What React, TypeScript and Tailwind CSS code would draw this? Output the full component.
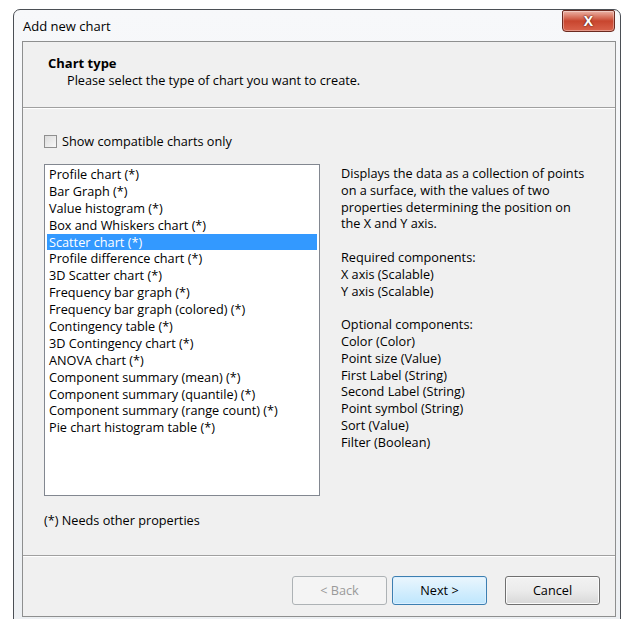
import { useState } from "react"

const chartTypes = [
  "Profile chart (*)",
  "Bar Graph (*)",
  "Value histogram (*)",
  "Box and Whiskers chart (*)",
  "Scatter chart (*)",
  "Profile difference chart (*)",
  "3D Scatter chart (*)",
  "Frequency bar graph (*)",
  "Frequency bar graph (colored) (*)",
  "Contingency table (*)",
  "3D Contingency chart (*)",
  "ANOVA chart (*)",
  "Component summary (mean) (*)",
  "Component summary (quantile) (*)",
  "Component summary (range count) (*)",
  "Pie chart histogram table (*)",
]

const description = [
  "Displays the data as a collection of points",
  "on a surface, with the values of two",
  "properties determining the position on",
  "the X and Y axis.",
  "",
  "Required components:",
  "X axis (Scalable)",
  "Y axis (Scalable)",
  "",
  "Optional components:",
  "Color (Color)",
  "Point size (Value)",
  "First Label (String)",
  "Second Label (String)",
  "Point symbol (String)",
  "Sort (Value)",
  "Filter (Boolean)",
]

function CloseButton() {
  return (
    <div className="flex h-[22px] w-[53px] items-center justify-center rounded-b-[4px] rounded-t-[2px] border border-[#6b2a20] bg-gradient-to-b from-[#eab3a6] via-[#c8452e] to-[#d9624b] shadow-[inset_0_0_0_1px_rgba(255,255,255,0.35)]">
      <span className="text-[14px] font-bold leading-none text-white [text-shadow:0_0_2px_#5a1a10,0_0_1px_#5a1a10]">X</span>
    </div>
  )
}

export default function App() {
  const [selected, setSelected] = useState(4)
  const [compatibleOnly, setCompatibleOnly] = useState(false)

  return (
    <div className="h-[619px] w-[625px] overflow-hidden bg-white font-['Open_Sans',sans-serif] text-[12.7px] text-black">
      {/* window frame */}
      <div className="ml-[13px] mt-[9px] h-[640px] w-[608px] rounded-t-[7px] border border-[#4b4f55] bg-gradient-to-b from-[#f7f8fa] to-[#eceff2] pl-[8px] pr-[4px]">
        <div className="flex h-[31px] items-start justify-between">
          <span className="pl-[1px] pt-[8px] text-[13px] leading-[16px] text-black">Add new chart</span>
          <div className="pr-[1px]">
            <CloseButton />
          </div>
        </div>

        {/* client area */}
        <div className="flex h-[576px] flex-col border border-[#8e8f8f] bg-[#f0f0f0]">
          <div className="h-[66px] border-b border-[#a0a0a0] pl-[25px] pt-[13px]">
            <div className="text-[13px] font-bold leading-[17px] text-black">Chart type</div>
            <div className="pl-[19px] leading-[17px]">Please select the type of chart you want to create.</div>
          </div>
          <div className="h-px bg-white" />

          <div className="flex flex-1 flex-col px-[21px]">
            <label className="mt-[24px] flex h-[16px] items-center gap-[5px]">
              <input
                type="checkbox"
                checked={compatibleOnly}
                onChange={(e) => setCompatibleOnly(e.target.checked)}
                className="h-[13px] w-[13px] appearance-none border border-[#8f8f8f] bg-gradient-to-br from-[#dcdcdc] to-[#f8f8f8]"
              />
              <span className="leading-[16px]">Show compatible charts only</span>
            </label>

            <div className="mt-[15px] flex gap-[21px]">
              <ul className="h-[332px] w-[276px] border border-[#828790] bg-white px-[2px] py-[1px]">
                {chartTypes.map((name, i) => (
                  <li
                    key={name}
                    onClick={() => setSelected(i)}
                    className={`h-[16.9px] whitespace-nowrap pl-[2px] leading-[16.9px] ${
                      selected === i ? "bg-[#3399ff] text-white" : ""
                    }`}
                  >
                    {name}
                  </li>
                ))}
              </ul>
              <div className="pt-[1px]">
                {description.map((line, i) => (
                  <div key={i} className="h-[16.8px] whitespace-nowrap leading-[16.8px]">
                    {line}
                  </div>
                ))}
              </div>
            </div>

            <div className="mt-[16px] leading-[16px]">(*) Needs other properties</div>
          </div>

          <div className="h-px bg-[#a0a0a0]" />
          <div className="h-px bg-white" />

          <div className="flex h-[59px] items-start justify-end pr-[15px] pt-[19px]">
            <button
              disabled
              className="h-[29px] w-[95px] rounded-[3px] border border-[#adb2b5] bg-[#f4f4f4] text-[12.7px] text-[#9a9a9a]"
            >
              &lt; Back
            </button>
            <button className="ml-[5px] h-[29px] w-[95px] rounded-[3px] border border-[#3c7fb1] bg-gradient-to-b from-[#eaf6fd] to-[#bee6fd] text-[12.7px] text-black shadow-[inset_0_0_0_1px_#dcefff]">
              Next &gt;
            </button>
            <button className="ml-[18px] h-[29px] w-[95px] rounded-[3px] border border-[#707070] bg-gradient-to-b from-[#f2f2f2] via-[#ebebeb] to-[#d8d8d8] text-[12.7px] text-black shadow-[inset_0_0_0_1px_#fbfbfb]">
              Cancel
            </button>
          </div>
        </div>
      </div>
    </div>
  )
}
